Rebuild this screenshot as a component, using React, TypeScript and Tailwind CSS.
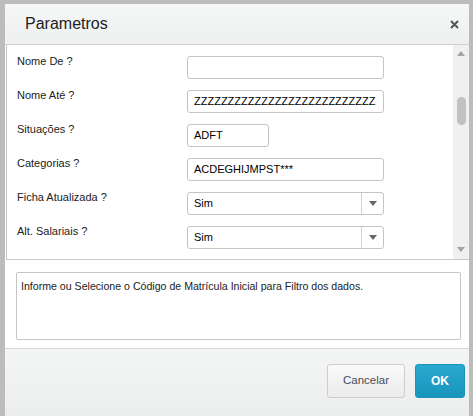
import React from 'react';

type Field = {
    label: string;
    value: string;
    kind: 'text' | 'select';
    width?: string;
};

const fields: Field[] = [
    { label: 'Nome De ?', value: '', kind: 'text' },
    { label: 'Nome Até ?', value: 'ZZZZZZZZZZZZZZZZZZZZZZZZZZZ', kind: 'text' },
    { label: 'Situações ?', value: 'ADFT', kind: 'text', width: 'w-[82px]' },
    { label: 'Categorias ?', value: 'ACDEGHIJMPST***', kind: 'text' },
    { label: 'Ficha Atualizada ?', value: 'Sim', kind: 'select' },
    { label: 'Alt. Salariais ?', value: 'Sim', kind: 'select' },
];

function Arrow({ dir, className }: { dir: 'up' | 'down'; className: string }) {
    return (
        <svg width="8" height="5" viewBox="0 0 8 5" className={className}>
            {dir === 'up' ? <polygon points="0,5 8,5 4,0" /> : <polygon points="0,0 8,0 4,5" />}
        </svg>
    );
}

function FieldRow({ field }: { field: Field }) {
    return (
        <div className="flex items-start">
            <div className="w-[170px] -mt-px text-[11px] leading-[12px] text-[#222]">{field.label}</div>
            {field.kind === 'text' ? (
                <div className={`${field.width ?? 'w-[197px]'} h-[23px] flex items-center pl-[6px] pr-px border border-[#c4c4c4] rounded-[3px] bg-white overflow-hidden whitespace-nowrap text-[11px] text-black`}>
                    {field.value}
                </div>
            ) : (
                <div className="w-[197px] h-[23px] flex border border-[#c4c4c4] rounded-[3px] bg-white text-[11px] text-black">
                    <div className="flex-1 flex items-center px-[6px]">{field.value}</div>
                    <div className="w-[22px] flex items-center justify-center border-l border-[#d0d0d0]">
                        <Arrow dir="down" className="fill-[#666]" />
                    </div>
                </div>
            )}
        </div>
    );
}

export default function App() {
    return (
        <div className="w-[473px] h-[416px] overflow-hidden bg-[#bcbcbc] pt-[4px] pl-[5px] pr-[4px] font-['Liberation_Sans',Arial,sans-serif]">
            <div className="h-full flex flex-col bg-white">
                {/* header */}
                <div className="h-[41px] shrink-0 flex items-center justify-between pl-[20px] pr-[10px] bg-gradient-to-b from-[#f6f7f7] to-[#eef0f0] border-b border-[#cfd1d1]">
                    <span className="text-[16px] text-[#222]">Parametros</span>
                    <svg width="9" height="9" viewBox="0 0 9 9" className="stroke-[#555]">
                        <path d="M1 1 L8 8 M8 1 L1 8" strokeWidth="2" />
                    </svg>
                </div>

                {/* parameter list */}
                <div className="h-[215px] shrink-0 flex border-l border-b border-[#c9c9c9] ml-px">
                    <div className="flex-1 flex flex-col gap-[11px] pt-[11px] pl-[10px] overflow-hidden">
                        {fields.map((f) => (
                            <FieldRow key={f.label} field={f} />
                        ))}
                    </div>
                    <div className="w-[16px] flex flex-col items-center bg-[#f0f0f0]">
                        <Arrow dir="up" className="mt-[6px] fill-[#a3a3a3]" />
                        <div className="mt-[41px] w-[9px] h-[28px] rounded-full bg-[#c1c1c1]" />
                        <div className="flex-1" />
                        <Arrow dir="down" className="mb-[7px] fill-[#a3a3a3]" />
                    </div>
                </div>

                {/* help text */}
                <div className="mt-[12px] ml-[11px] mr-[8px] h-[68px] shrink-0 border border-[#c6c6c6] rounded-[2px] px-[4px] pt-[6px] text-[10.6px] text-[#222]">
                    Informe ou Selecione o Código de Matrícula Inicial para Filtro dos dados.
                </div>

                {/* footer */}
                <div className="mt-[8px] flex-1 flex justify-end items-start gap-[10px] pt-[15px] pr-[4px] border-t border-[#d6d6d6] bg-gradient-to-b from-[#f4f5f5] to-[#eceded]">
                    <button className="w-[78px] h-[34px] rounded-[3px] border border-[#cdcdcd] bg-gradient-to-b from-[#fafafa] to-[#ebebeb] text-[11.5px] text-[#4a4a5c]">
                        Cancelar
                    </button>
                    <button className="w-[50px] h-[34px] rounded-[3px] border border-[#1b92b8] bg-gradient-to-b from-[#2aa8cf] to-[#1695bd] text-[12px] font-bold text-white">
                        OK
                    </button>
                </div>
            </div>
        </div>
    );
}
